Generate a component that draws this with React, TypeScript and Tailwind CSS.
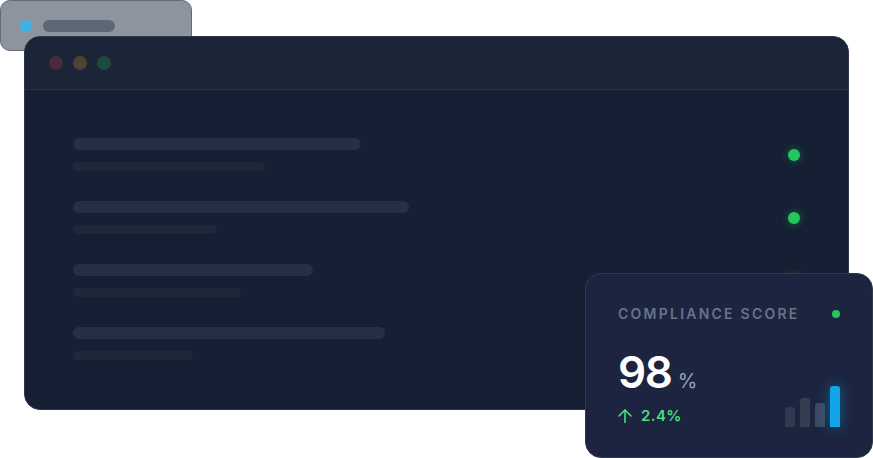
import React from 'react';

const rows = [
  { main: 288, sub: 192, dot: 'green' },
  { main: 336, sub: 144, dot: 'green' },
  { main: 240, sub: 168, dot: 'amber' },
  { main: 312, sub: 120, dot: 'green' },
];

const bars = [
  { h: 20, cls: 'bg-[#2e3a4d]' },
  { h: 29, cls: 'bg-[#323e52]' },
  { h: 24, cls: 'bg-[#3c4a5f]' },
];

const App: React.FC = () => {
  return (
    <div
      className="relative w-[873px] h-[458px] bg-white overflow-hidden"
      style={{ fontFamily: 'Inter, "Noto Sans", sans-serif' }}
    >
      {/* Back panel */}
      <div className="absolute left-0 top-0 w-[192px] h-[51px] rounded-[10px] border border-[#646b78] bg-[#8e949e] flex items-center pl-[19px] gap-[11px]">
        <div className="w-3 h-3 rounded-full bg-[#3db2ea]" />
        <div className="w-[72px] h-3 rounded-full bg-[#5e6776]" />
      </div>

      {/* Main window */}
      <div className="relative ml-6 mt-9 w-[825px] h-[374px] rounded-2xl border border-[#2c374b] bg-[#161f33] overflow-hidden">
        <div className="h-[53px] bg-[#1b2537] border-b border-[#2a3548] flex items-center pl-6 gap-2.5">
          <div className="w-3.5 h-3.5 rounded-full bg-[#4a2a3a]" />
          <div className="w-3.5 h-3.5 rounded-full bg-[#4a4430]" />
          <div className="w-3.5 h-3.5 rounded-full bg-[#1e4a3e]" />
        </div>
        <div className="px-12 pt-12 flex flex-col gap-[30px]">
          {rows.map((r, i) => (
            <div key={i} className="flex items-center justify-between">
              <div className="flex flex-col">
                <div className="h-3 rounded-full bg-[#243045]" style={{ width: r.main }} />
                <div className="mt-3 h-[9px] rounded-full bg-[#1e283a]" style={{ width: r.sub }} />
              </div>
              {r.dot === 'green' ? (
                <div className="w-3 h-3 rounded-full bg-[#22c55e] shadow-[0_0_8px_rgba(34,197,94,0.45)]" />
              ) : (
                <div className="w-3 h-3 rounded-full bg-[#f59e0b] shadow-[0_0_8px_rgba(245,158,11,0.45)]" />
              )}
            </div>
          ))}
        </div>
      </div>

      {/* Score card */}
      <div className="absolute left-[585px] top-[273px] w-[288px] rounded-2xl border border-[#2f3a4f] bg-[#1c2440] px-8 pt-[30px] pb-[31px]">
        <div className="flex items-center justify-between h-5">
          <span className="text-sm font-semibold tracking-[0.16em] text-[#64748b] leading-5">COMPLIANCE SCORE</span>
          <div className="w-2 h-2 rounded-full bg-[#22c55e]" />
        </div>
        <div className="flex items-end justify-between mt-[26px]">
          <div className="flex flex-col">
            <div className="flex items-baseline">
              <span className="text-[44px] leading-[44px] font-semibold tracking-[-0.03em] text-white">98</span>
              <span className="ml-1.5 text-xl text-[#94a3b8]">%</span>
            </div>
            <div className="mt-[11px] flex items-center gap-[9px] h-5 text-[#4ade80]">
              <svg width="14" height="14" viewBox="0 0 14 14" fill="none" stroke="currentColor" strokeWidth="1.6" strokeLinecap="round" strokeLinejoin="round">
                <path d="M1 7l6-6 6 6" />
                <path d="M7 1v12.5" />
              </svg>
              <span className="text-[15px] leading-5 font-semibold tracking-wide">2.4%</span>
            </div>
          </div>
          <div className="flex items-end gap-[5px] mb-[-1px]">
            {bars.map((b, i) => (
              <div key={i} className={`w-[10px] rounded-t-[3px] ${b.cls}`} style={{ height: b.h }} />
            ))}
            <div className="w-[10px] h-[41px] rounded-t-[3px] bg-[#0ea5e9] shadow-[0_0_14px_rgba(14,165,233,0.5)]" />
          </div>
        </div>
      </div>
    </div>
  );
};

export default App;
